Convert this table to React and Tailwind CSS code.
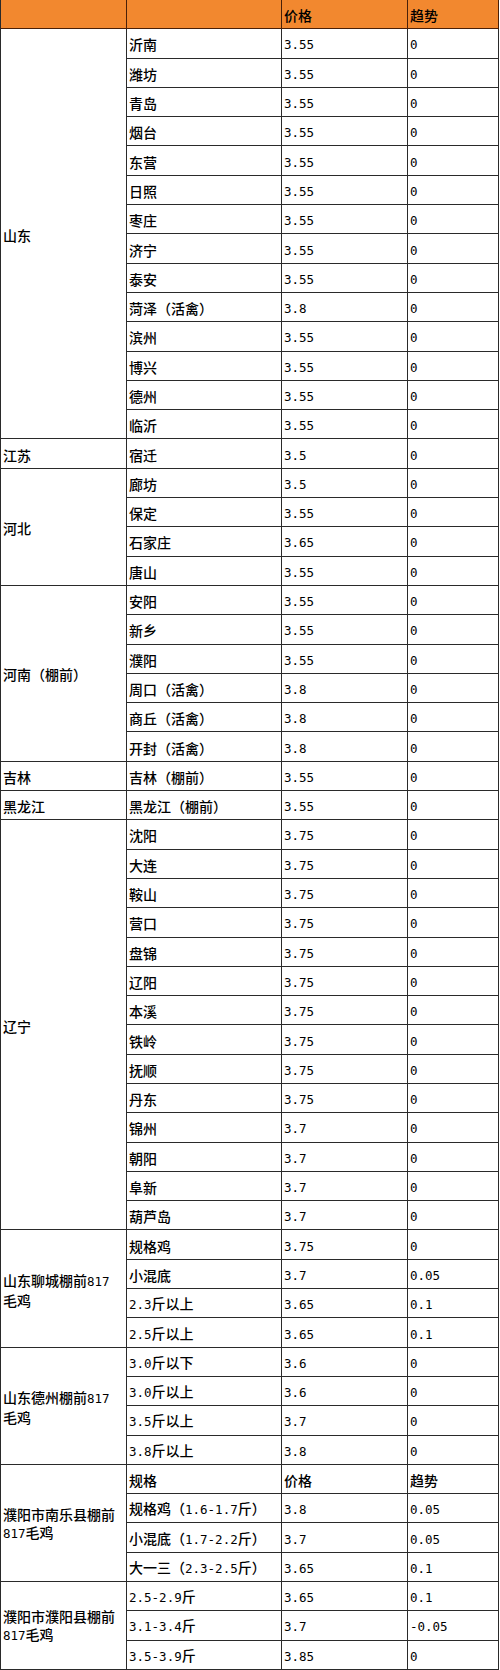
import React from "react";

const groups = [
  { name: ["山东"], rows: [["沂南","3.55","0"],["潍坊","3.55","0"],["青岛","3.55","0"],["烟台","3.55","0"],["东营","3.55","0"],["日照","3.55","0"],["枣庄","3.55","0"],["济宁","3.55","0"],["泰安","3.55","0"],["菏泽（活禽）","3.8","0"],["滨州","3.55","0"],["博兴","3.55","0"],["德州","3.55","0"],["临沂","3.55","0"]] },
  { name: ["江苏"], rows: [["宿迁","3.5","0"]] },
  { name: ["河北"], rows: [["廊坊","3.5","0"],["保定","3.55","0"],["石家庄","3.65","0"],["唐山","3.55","0"]] },
  { name: ["河南（棚前）"], rows: [["安阳","3.55","0"],["新乡","3.55","0"],["濮阳","3.55","0"],["周口（活禽）","3.8","0"],["商丘（活禽）","3.8","0"],["开封（活禽）","3.8","0"]] },
  { name: ["吉林"], rows: [["吉林（棚前）","3.55","0"]] },
  { name: ["黑龙江"], rows: [["黑龙江（棚前）","3.55","0"]] },
  { name: ["辽宁"], rows: [["沈阳","3.75","0"],["大连","3.75","0"],["鞍山","3.75","0"],["营口","3.75","0"],["盘锦","3.75","0"],["辽阳","3.75","0"],["本溪","3.75","0"],["铁岭","3.75","0"],["抚顺","3.75","0"],["丹东","3.75","0"],["锦州","3.7","0"],["朝阳","3.7","0"],["阜新","3.7","0"],["葫芦岛","3.7","0"]] },
  { name: ["山东聊城棚前817","毛鸡"], rows: [["规格鸡","3.75","0"],["小混底","3.7","0.05"],["2.3斤以上","3.65","0.1"],["2.5斤以上","3.65","0.1"]] },
  { name: ["山东德州棚前817","毛鸡"], rows: [["3.0斤以下","3.6","0"],["3.0斤以上","3.6","0"],["3.5斤以上","3.7","0"],["3.8斤以上","3.8","0"]] },
  { name: ["濮阳市南乐县棚前","817毛鸡"], rows: [["规格","价格","趋势"],["规格鸡（1.6-1.7斤）","3.8","0.05"],["小混底（1.7-2.2斤）","3.7","0.05"],["大一三（2.3-2.5斤）","3.65","0.1"]] },
  { name: ["濮阳市濮阳县棚前","817毛鸡"], rows: [["2.5-2.9斤","3.65","0.1"],["3.1-3.4斤","3.7","-0.05"],["3.5-3.9斤","3.85","0"]] },
];

const spanClass = {
  1: "row-span-1",
  3: "row-span-3",
  4: "row-span-4",
  6: "row-span-6",
  14: "row-span-14",
};

const cell = "border-r border-b border-[#2a2a2a] flex items-center pl-[2px] pt-[2px] whitespace-nowrap overflow-hidden";

function T({ s }) {
  const parts = s.split(/([\x00-\x7f]+)/).filter(Boolean);
  return (
    <span>
      {parts.map((p, i) =>
        /^[\x00-\x7f]+$/.test(p) ? (
          <span key={i} className="font-['DejaVu_Sans_Mono',monospace] text-[12.5px]">{p}</span>
        ) : (
          <span key={i}>{p}</span>
        )
      )}
    </span>
  );
}

export default function App() {
  return (
    <div className="w-[500px] h-[1670px] bg-white text-black text-[14px] leading-[18px] font-medium font-['Noto_Sans_CJK_SC',sans-serif]">
      <div className="grid grid-cols-[126px_155px_126px_91px] auto-rows-[29.3px] border-l border-[#2a2a2a]">
        <div className={`${cell} bg-[#f2882f] border-[#4a2008]`}></div>
        <div className={`${cell} bg-[#f2882f] border-[#4a2008]`}></div>
        <div className={`${cell} bg-[#f2882f] border-[#4a2008]`}>价格</div>
        <div className={`${cell} bg-[#f2882f] border-[#4a2008]`}>趋势</div>
        {groups.map((g, gi) => (
          <React.Fragment key={gi}>
            <div className={`${cell} ${spanClass[g.rows.length]} flex-col !items-start justify-center`}>
              {g.name.map((l, li) => (
                <span key={li} className="block"><T s={l} /></span>
              ))}
            </div>
            {g.rows.map((r, ri) => (
              <React.Fragment key={ri}>
                <div className={`${cell} col-start-2`}><T s={r[0]} /></div>
                <div className={cell}><T s={r[1]} /></div>
                <div className={cell}><T s={r[2]} /></div>
              </React.Fragment>
            ))}
          </React.Fragment>
        ))}
      </div>
    </div>
  );
}
